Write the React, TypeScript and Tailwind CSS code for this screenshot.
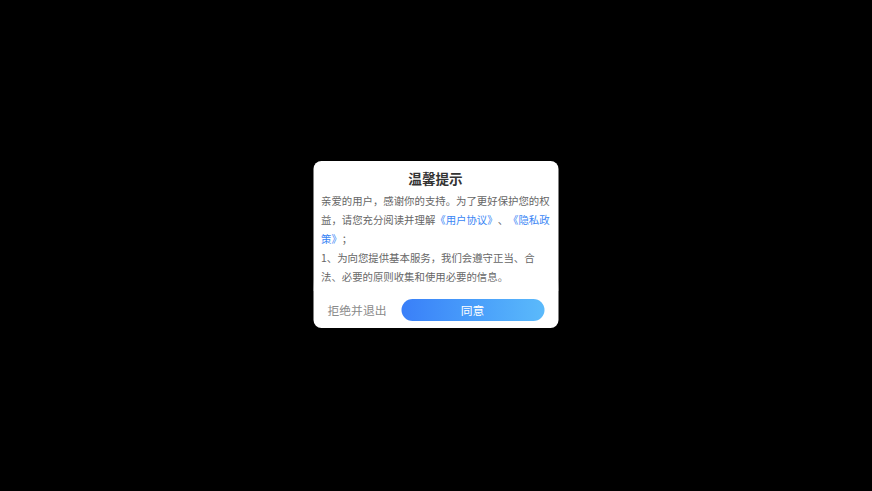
import React from "react";

const font = "font-['Noto_Sans_CJK_SC','Noto_Sans',sans-serif]";

const PrivacyDialog = () => {
  return (
    <div className="w-[245px] rounded-[8px] bg-white pt-[7px] pb-[7px] [text-spacing-trim:space-all]">
      <div className="px-[8px] text-center text-[13.6px] font-bold leading-[20px] text-[#333333]">
        温馨提示
      </div>
      <div className="relative mt-[3px] h-[100px] overflow-hidden px-[8px] text-[10.4px] leading-[19px] text-[#666666]">
        <p>
          亲爱的用户，感谢你的支持。为了更好保护您的权益，请您充分阅读并理解
          <span className="text-[#3a86f5]">《用户协议》</span>、
          <span className="text-[#3a86f5]">《隐私政策》</span>；
        </p>
        <p>1、为向您提供基本服务，我们会遵守正当、合法、必要的原则收集和使用必要的信息。</p>
        <p>2、基于您的授权我们可能会收集和使用您的相关信息，您有权拒绝或取消授权。</p>
        <div className="absolute inset-x-0 bottom-0 h-[12px] bg-gradient-to-b from-white/0 to-white/90" />
      </div>
      <div className="mt-[8px] flex items-center px-[8px]">
        <button className="h-[22px] w-[72px] text-center text-[11.8px] text-[#8a8a8a]">拒绝并退出</button>
        <button className="ml-[8px] h-[22px] w-[143px] rounded-full bg-gradient-to-r from-[#3a7ff8] to-[#5bbafb] text-center text-[11.8px] text-white">
          同意
        </button>
      </div>
    </div>
  );
};

export default function App() {
  return (
    <div className={`flex h-[491px] w-[872px] justify-center bg-black pt-[161px] ${font}`}>
      <div className="-translate-x-[0.5px]">
        <PrivacyDialog />
      </div>
    </div>
  );
}
